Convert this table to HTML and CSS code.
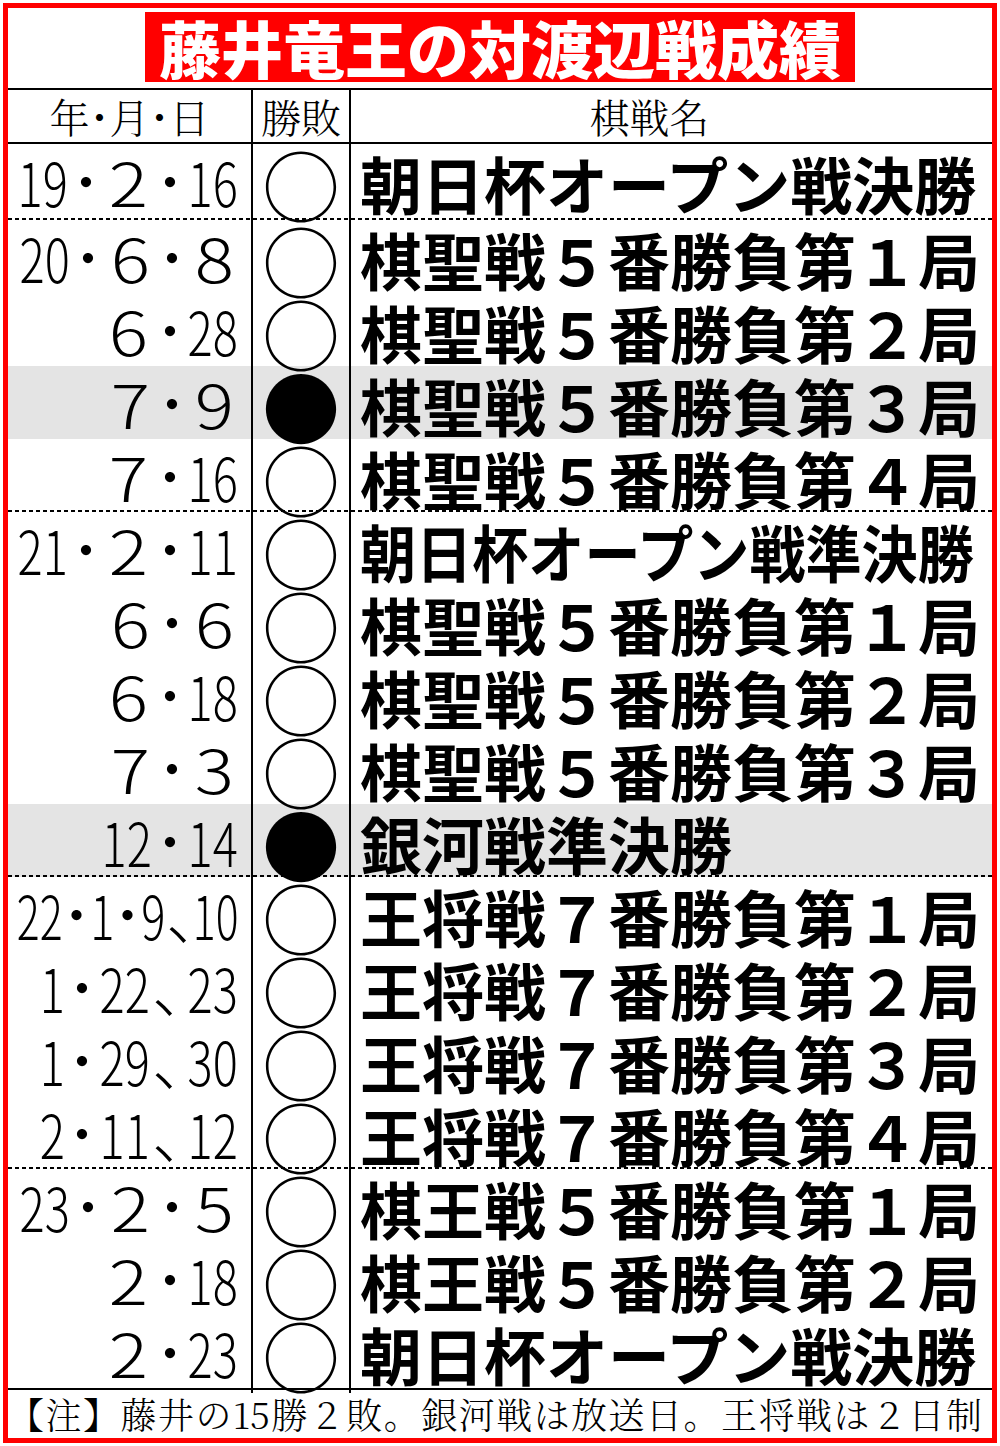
FILE: index.html
```html
<!DOCTYPE html>
<html lang="ja">
<head>
<meta charset="utf-8">
<title>藤井竜王の対渡辺戦成績</title>
<link rel="stylesheet" href="styles.css">
</head>
<body>
<div class="frame">
  <div class="title-row"><h1 class="title">藤井竜王の対渡辺戦成績</h1></div>
  <div class="table">
    <div class="row head">
      <div class="c date-h">年・月・日</div>
      <div class="c res-h">勝敗</div>
      <div class="c name-h">棋戦名</div>
    </div>

    <div class="row first sep">
      <div class="c date"><span class="tk n2"><span>19</span></span><span class="tk dt"><span>・</span></span><span class="tk f"><span>２</span></span><span class="tk dt"><span>・</span></span><span class="tk n2"><span>16</span></span></div>
      <div class="c res">○</div>
      <div class="c name">朝日杯オープン戦決勝</div>
    </div>
    <div class="row">
      <div class="c date"><span class="tk n2"><span>20</span></span><span class="tk dt"><span>・</span></span><span class="tk f"><span>６</span></span><span class="tk dt"><span>・</span></span><span class="tk f"><span>８</span></span></div>
      <div class="c res">○</div>
      <div class="c name">棋聖戦５番勝負第１局</div>
    </div>
    <div class="row">
      <div class="c date"><span class="tk f"><span>６</span></span><span class="tk dt"><span>・</span></span><span class="tk n2"><span>28</span></span></div>
      <div class="c res">○</div>
      <div class="c name">棋聖戦５番勝負第２局</div>
    </div>
    <div class="row lose">
      <div class="c date"><span class="tk f"><span>７</span></span><span class="tk dt"><span>・</span></span><span class="tk f"><span>９</span></span></div>
      <div class="c res">●</div>
      <div class="c name">棋聖戦５番勝負第３局</div>
    </div>
    <div class="row sep">
      <div class="c date"><span class="tk f"><span>７</span></span><span class="tk dt"><span>・</span></span><span class="tk n2"><span>16</span></span></div>
      <div class="c res">○</div>
      <div class="c name">棋聖戦５番勝負第４局</div>
    </div>

    <div class="row">
      <div class="c date"><span class="tk n2"><span>21</span></span><span class="tk dt"><span>・</span></span><span class="tk f"><span>２</span></span><span class="tk dt"><span>・</span></span><span class="tk n2"><span>11</span></span></div>
      <div class="c res">○</div>
      <div class="c name"><span class="cond">朝日杯オープン戦準決勝</span></div>
    </div>
    <div class="row">
      <div class="c date"><span class="tk f"><span>６</span></span><span class="tk dt"><span>・</span></span><span class="tk f"><span>６</span></span></div>
      <div class="c res">○</div>
      <div class="c name">棋聖戦５番勝負第１局</div>
    </div>
    <div class="row">
      <div class="c date"><span class="tk f"><span>６</span></span><span class="tk dt"><span>・</span></span><span class="tk n2"><span>18</span></span></div>
      <div class="c res">○</div>
      <div class="c name">棋聖戦５番勝負第２局</div>
    </div>
    <div class="row">
      <div class="c date"><span class="tk f"><span>７</span></span><span class="tk dt"><span>・</span></span><span class="tk f"><span>３</span></span></div>
      <div class="c res">○</div>
      <div class="c name">棋聖戦５番勝負第３局</div>
    </div>
    <div class="row lose sep">
      <div class="c date"><span class="tk n2"><span>12</span></span><span class="tk dt"><span>・</span></span><span class="tk n2"><span>14</span></span></div>
      <div class="c res">●</div>
      <div class="c name">銀河戦準決勝</div>
    </div>

    <div class="row">
      <div class="c date tight"><span class="tk n2"><span>22</span></span><span class="tk dt"><span>・</span></span><span class="tk n1"><span>1</span></span><span class="tk dt"><span>・</span></span><span class="tk n1"><span>9</span></span><span class="tk cm"><span>、</span></span><span class="tk n2"><span>10</span></span></div>
      <div class="c res">○</div>
      <div class="c name">王将戦７番勝負第１局</div>
    </div>
    <div class="row">
      <div class="c date"><span class="tk n1"><span>1</span></span><span class="tk dt"><span>・</span></span><span class="tk n2"><span>22</span></span><span class="tk cm"><span>、</span></span><span class="tk n2"><span>23</span></span></div>
      <div class="c res">○</div>
      <div class="c name">王将戦７番勝負第２局</div>
    </div>
    <div class="row">
      <div class="c date"><span class="tk n1"><span>1</span></span><span class="tk dt"><span>・</span></span><span class="tk n2"><span>29</span></span><span class="tk cm"><span>、</span></span><span class="tk n2"><span>30</span></span></div>
      <div class="c res">○</div>
      <div class="c name">王将戦７番勝負第３局</div>
    </div>
    <div class="row sep">
      <div class="c date"><span class="tk n1"><span>2</span></span><span class="tk dt"><span>・</span></span><span class="tk n2"><span>11</span></span><span class="tk cm"><span>、</span></span><span class="tk n2"><span>12</span></span></div>
      <div class="c res">○</div>
      <div class="c name">王将戦７番勝負第４局</div>
    </div>

    <div class="row">
      <div class="c date"><span class="tk n2"><span>23</span></span><span class="tk dt"><span>・</span></span><span class="tk f"><span>２</span></span><span class="tk dt"><span>・</span></span><span class="tk f"><span>５</span></span></div>
      <div class="c res">○</div>
      <div class="c name">棋王戦５番勝負第１局</div>
    </div>
    <div class="row">
      <div class="c date"><span class="tk f"><span>２</span></span><span class="tk dt"><span>・</span></span><span class="tk n2"><span>18</span></span></div>
      <div class="c res">○</div>
      <div class="c name">棋王戦５番勝負第２局</div>
    </div>
    <div class="row">
      <div class="c date"><span class="tk f"><span>２</span></span><span class="tk dt"><span>・</span></span><span class="tk n2"><span>23</span></span></div>
      <div class="c res">○</div>
      <div class="c name">朝日杯オープン戦決勝</div>
    </div>
  </div>
  <div class="note">【注】藤井の15勝２敗。銀河戦は放送日。王将戦は２日制</div>
</div>
</body>
</html>
```
FILE: styles.css
```css
html, body {
  background: #fff;
}
body {
  margin: 3px;
  color: #000;
  font-family: "Noto Sans CJK JP", sans-serif;
}
.frame {
  border: 5px solid #ff0000;
  width: 984px;
}
.title-row {
  height: 80px;
  box-sizing: border-box;
  padding-top: 4px;
  display: flex;
  justify-content: center;
  align-items: flex-start;
}
.title {
  margin: 0;
  background: #ff0000;
  color: #fff;
  height: 70px;
  line-height: 70px;
  padding: 0 14px;
  font-family: "Noto Sans CJK JP", sans-serif;
  font-weight: 900;
  font-size: 62px;
  white-space: nowrap;
}
.table {
  border-top: 2px solid #000;
}
.row {
  display: grid;
  grid-template-columns: 243px 98px 1fr;
  height: 73px;
  box-sizing: border-box;
}
.row.first {
  height: 76px;
}
.row.head {
  height: 54px;
  border-bottom: 2px solid #000;
}
.row.lose {
  background-color: #e4e4e4;
}
.row.sep {
  background-image: repeating-linear-gradient(90deg, #000 0 4px, transparent 4px 7px);
  background-size: 100% 2px;
  background-position: left bottom;
  background-repeat: no-repeat;
}
.c {
  min-width: 0;
  display: flex;
  align-items: center;
}
.res, .name, .res-h, .name-h {
  border-left: 2px solid #000;
}
.date-h, .res-h, .name-h {
  justify-content: center;
  font-family: "Noto Serif CJK JP", "Noto Sans CJK JP", serif;
  font-weight: 300;
  font-size: 40px;
  line-height: 1;
}
.date-h {
  font-feature-settings: "halt";
}
.name-h {
  padding-right: 44px;
}
.date {
  justify-content: flex-end;
  padding-right: 11px;
  padding-bottom: 6px;
  box-sizing: border-box;
  font-weight: 300;
  font-size: 61px;
  line-height: 1;
  white-space: nowrap;
}
.tk {
  display: inline-flex;
  justify-content: center;
  align-items: center;
  flex-shrink: 0;
}
.tk > span {
  display: inline-block;
  flex-shrink: 0;
}
.n1 { width: 27px; }
.n2 { width: 54px; }
.f { width: 52px; }
.dt { width: 32px; }
.cm { width: 34px; justify-content: flex-start; }
.n1 > span, .n2 > span { transform: scaleX(0.77); }
.f > span {
  font-feature-settings: "pwid";
  transform: scaleX(1.2);
}
.dt > span, .cm > span {
  font-feature-settings: "halt";
}
.dt > span {
  font-size: 54px;
}
.tight .n2 { width: 48px; }
.tight .n2 > span { transform: scaleX(0.7); }
.tight .n1 { width: 26px; }
.tight .n1 > span { transform: scaleX(0.74); }
.tight .dt { width: 25px; }
.tight .cm { width: 26px; }
.res {
  justify-content: center;
  font-weight: 300;
  font-size: 78px;
  line-height: 1;
}
.name {
  padding-left: 9px;
  font-weight: 700;
  font-size: 62px;
  line-height: 1;
  white-space: nowrap;
}
.cond {
  display: inline-block;
  transform: scaleX(0.905);
  transform-origin: left center;
}
.note {
  border-top: 2px solid #000;
  height: 50px;
  box-sizing: border-box;
  padding: 0 10px 0 0;
  font-family: "Noto Serif CJK JP", "Noto Sans CJK JP", serif;
  font-weight: 300;
  font-size: 36px;
  line-height: 48px;
  white-space: nowrap;
  text-align: justify;
  text-align-last: justify;
}
```
